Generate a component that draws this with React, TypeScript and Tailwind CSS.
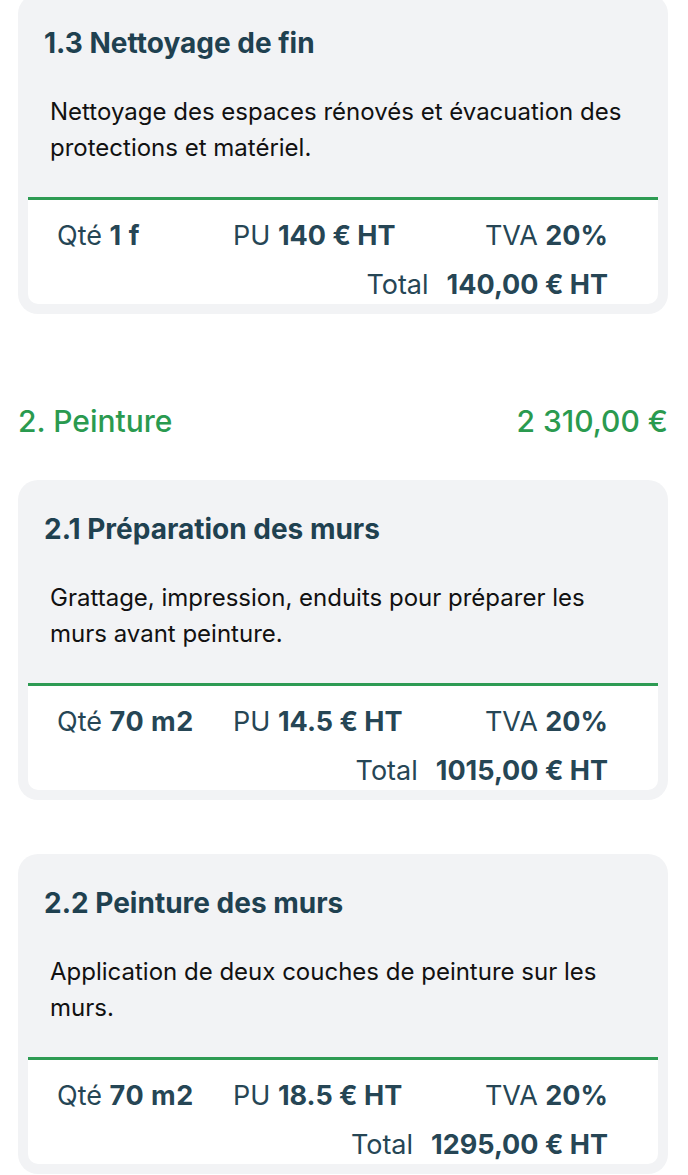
const items = [
  {
    id: '1.3',
    title: 'Nettoyage de fin',
    description: 'Nettoyage des espaces rénovés et évacuation des protections et matériel.',
    qty: '1 f',
    pu: '140 € HT',
    tva: '20%',
    total: '140,00 € HT',
  },
];

const peinture = [
  {
    id: '2.1',
    title: 'Préparation des murs',
    description: 'Grattage, impression, enduits pour préparer les murs avant peinture.',
    qty: '70 m2',
    pu: '14.5 € HT',
    tva: '20%',
    total: '1015,00 € HT',
  },
  {
    id: '2.2',
    title: 'Peinture des murs',
    description: 'Application de deux couches de peinture sur les murs.',
    qty: '70 m2',
    pu: '18.5 € HT',
    tva: '20%',
    total: '1295,00 € HT',
  },
];

type Item = (typeof items)[number];

function ItemCard({ item }: { item: Item }) {
  return (
    <div className="rounded-[20px] bg-[#f2f3f5] pt-[31px] px-[10px] pb-[10px]">
      <h3 className="pl-[16px] text-[28px] leading-[36px] font-bold text-[#1f4150]">
        {item.id} {item.title}
      </h3>
      <p className="mt-[33px] pl-[22px] pr-[18px] text-[24px] leading-[36px] text-[#111111]">
        {item.description}
      </p>
      <div className="mt-[31px] rounded-b-[10px] border-t-[3px] border-[#2e9b53] bg-white pl-[29px] pr-[50px] pt-[22px] pb-[6px] text-[27px] leading-[27px] text-[#264655]">
        <div className="grid grid-cols-[176px_1fr_auto]">
          <span>
            Qté <span className="font-bold tracking-[0.02em]">{item.qty}</span>
          </span>
          <span>
            PU <span className="font-bold">{item.pu}</span>
          </span>
          <span>
            TVA <span className="font-bold">{item.tva}</span>
          </span>
        </div>
        <div className="mt-[22px] flex justify-end gap-[18px]">
          <span>Total</span>
          <span className="font-bold">{item.total}</span>
        </div>
      </div>
    </div>
  );
}

export default function App() {
  return (
    <div className="h-[1175px] overflow-hidden bg-white pl-[18px] pr-[20px] font-['Inter',sans-serif]">
      <div className="mt-[-6px]">
        {items.map((item) => (
          <ItemCard key={item.id} item={item} />
        ))}
      </div>

      {/* Section header */}
      <div className="mt-[89px] flex items-center justify-between text-[30px] leading-[36px] font-medium text-[#2a9a4f]">
        <h2>2. Peinture</h2>
        <span>2 310,00 €</span>
      </div>

      <div className="mt-[41px] flex flex-col gap-[54px]">
        {peinture.map((item) => (
          <ItemCard key={item.id} item={item} />
        ))}
      </div>
    </div>
  );
}
